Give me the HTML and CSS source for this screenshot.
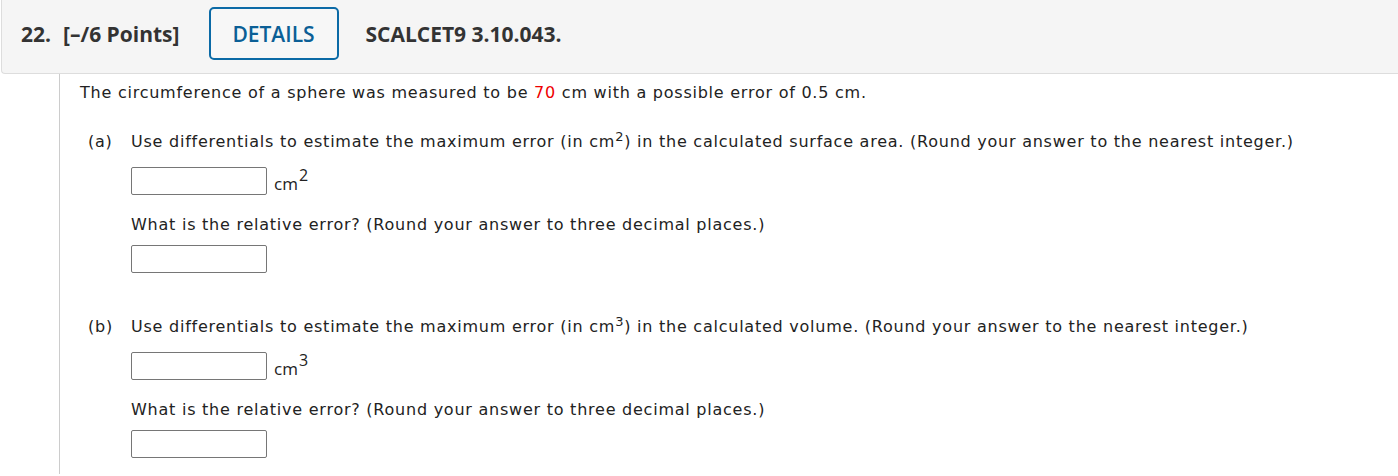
FILE: index.html
```html
<!DOCTYPE html>
<html>
<head>
<meta charset="utf-8">
<link rel="stylesheet" href="styles.css">
</head>
<body>
<div class="header">
  <span class="qnum">22.</span>
  <span class="points">[–/6 Points]</span>
  <button class="details">DETAILS</button>
  <span class="code">SCALCET9 3.10.043.</span>
</div>
<div class="content">
  <p class="intro">The circumference of a sphere was measured to be <span class="red">70</span> cm with a possible error of 0.5 cm.</p>
  <div class="part">
    <div class="label">(a)</div>
    <div class="body">
      <p class="q">Use differentials to estimate the maximum error (in cm<sup>2</sup>) in the calculated surface area. (Round your answer to the nearest integer.)</p>
      <div class="answer"><span class="box"></span><span class="unit">cm<sup>2</sup></span></div>
      <p class="q q2">What is the relative error? (Round your answer to three decimal places.)</p>
      <div class="answer answer2"><span class="box"></span></div>
    </div>
  </div>
  <div class="part partb">
    <div class="label">(b)</div>
    <div class="body">
      <p class="q">Use differentials to estimate the maximum error (in cm<sup>3</sup>) in the calculated volume. (Round your answer to the nearest integer.)</p>
      <div class="answer"><span class="box"></span><span class="unit">cm<sup>3</sup></span></div>
      <p class="q q2">What is the relative error? (Round your answer to three decimal places.)</p>
      <div class="answer answer2 last"><span class="box"></span></div>
    </div>
  </div>
</div>
</body>
</html>
```
FILE: styles.css
```css
html, body {
  margin: 0;
  padding: 0;
  background: #fff;
}
body {
  font-family: "DejaVu Sans", Verdana, sans-serif;
  color: #222;
  font-size: 16px;
  letter-spacing: 0.76px;
}
.header {
  box-sizing: border-box;
  height: 74px;
  margin-left: 1px;
  background: #f5f5f5;
  border: 1px solid #ddd;
  border-top: none;
  border-right: none;
  border-radius: 0 0 0 4px;
  display: flex;
  align-items: center;
  padding-left: 19px;
  padding-bottom: 6px;
  font-family: "Open Sans", sans-serif;
  font-weight: 700;
  font-size: 21px;
  letter-spacing: 0;
  color: #333;
}
.qnum { margin-right: 12px; }
.points { margin-right: 29px; }
.details {
  box-sizing: border-box;
  width: 130px;
  height: 53px;
  background: #f7f7f7;
  border: 2px solid #0b6aa6;
  border-radius: 5px;
  color: #0b5f96;
  font-family: "Open Sans", sans-serif;
  font-weight: 600;
  font-size: 21px;
  margin-right: 27px;
  padding: 0;
}
.content {
  margin-left: 59px;
  border-left: 1px solid #ccc;
  padding-left: 20px;
  padding-top: 9px;
  min-height: 391px;
}
p { margin: 0; }
.intro { line-height: 20px; }
.red { color: #e00; }
.part {
  display: flex;
  margin-top: 29px;
  margin-left: 8px;
}
.partb { margin-top: 44px; }
.label { width: 43px; }
.q { line-height: 20px; }
.q sup { font-size: 13px; vertical-align: 6px; line-height: 0; }
.answer {
  display: flex;
  align-items: center;
  margin-top: 15px;
  height: 28px;
}
.answer2 { margin-top: 10px; }
.answer2.last { margin-top: 10px; }
.box {
  box-sizing: border-box;
  width: 136px;
  height: 28px;
  border: 1px solid #767676;
  border-radius: 2px;
  background: #fff;
}
.unit {
  font-family: "Open Sans", sans-serif;
  font-size: 17px;
  letter-spacing: 0;
  margin-left: 7px;
  margin-top: 4px;
}
.unit sup { font-size: 16px; vertical-align: 9px; line-height: 0; margin-left: 1px; }
.q2 { margin-top: 20px; }
```
